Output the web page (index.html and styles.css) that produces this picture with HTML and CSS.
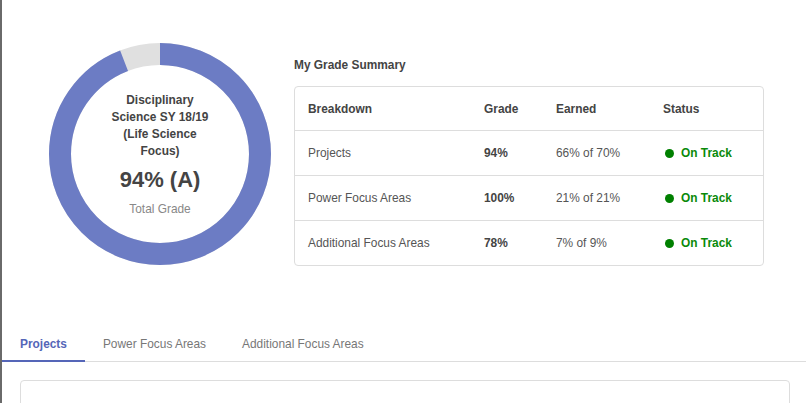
FILE: index.html
```html
<!DOCTYPE html>
<html>
<head>
<meta charset="utf-8">
<link rel="stylesheet" href="styles.css">
</head>
<body>
<div class="page">
  <section class="summary">
    <div class="donut">
      <svg class="donut-svg" width="222" height="222" viewBox="0 0 222 222">
        <circle cx="111" cy="111" r="100" fill="none" stroke="#e0e0e0" stroke-width="22"/>
        <circle cx="111" cy="111" r="100" fill="none" stroke="#6c7cc4" stroke-width="22"
          stroke-dasharray="590.6 628.3" transform="rotate(-90 111 111)"/>
      </svg>
      <div class="donut-text">
        <div class="course">Disciplinary Science SY 18/19 (Life Science Focus)</div>
        <div class="grade">94% (A)</div>
        <div class="grade-label">Total Grade</div>
      </div>
    </div>
    <div class="grade-summary">
      <h2 class="summary-title">My Grade Summary</h2>
      <div class="table">
        <div class="row head">
          <div>Breakdown</div><div>Grade</div><div>Earned</div><div>Status</div>
        </div>
        <div class="row">
          <div>Projects</div><div class="bold">94%</div><div>66% of 70%</div>
          <div class="status"><span class="dot"></span>On Track</div>
        </div>
        <div class="row">
          <div>Power Focus Areas</div><div class="bold">100%</div><div>21% of 21%</div>
          <div class="status"><span class="dot"></span>On Track</div>
        </div>
        <div class="row">
          <div>Additional Focus Areas</div><div class="bold">78%</div><div>7% of 9%</div>
          <div class="status"><span class="dot"></span>On Track</div>
        </div>
      </div>
    </div>
  </section>
  <nav class="tabs">
    <div class="tab active">Projects</div>
    <div class="tab">Power Focus Areas</div>
    <div class="tab">Additional Focus Areas</div>
  </nav>
  <div class="panel"></div>
</div>
</body>
</html>
```

FILE: styles.css
```css
* { box-sizing: border-box; }
html, body { margin: 0; padding: 0; background: #fff; }
body {
  font-family: "Liberation Sans", Arial, sans-serif;
  font-size: 11.9px;
  color: #555;
  overflow: hidden;
  height: 403px;
}
.page {
  border-left: 2px solid #6a6a6a;
  min-height: 403px;
}
.summary {
  display: flex;
  align-items: flex-start;
  padding: 43px 0 0 47px;
  gap: 23px;
}
.donut {
  position: relative;
  width: 222px;
  height: 222px;
  flex: none;
}
.donut-svg { display: block; }
.donut-text {
  position: absolute;
  inset: 0;
  display: flex;
  flex-direction: column;
  align-items: center;
  justify-content: center;
  text-align: center;
  padding-top: 1px;
}
.course {
  width: 110px;
  font-weight: bold;
  font-size: 11.9px;
  line-height: 17px;
  color: #444;
}
.grade {
  margin-top: 7px;
  font-size: 22px;
  line-height: 26px;
  font-weight: bold;
  color: #444;
}
.grade-label {
  margin-top: 8px;
  font-size: 11.9px;
  line-height: 17px;
  color: #888;
}
.grade-summary {
  width: 470px;
}
.summary-title {
  margin: 15px 0 13px;
  font-size: 11.9px;
  line-height: 15px;
  font-weight: bold;
  color: #444;
}
.table {
  border: 1px solid #ddd;
  border-radius: 4px;
}
.row {
  display: grid;
  grid-template-columns: 176px 72px 107px 1fr;
  align-items: center;
  height: 45px;
  padding-left: 13px;
  padding-bottom: 1px;
  border-top: 1px solid #ddd;
}
.row.head {
  border-top: none;
  height: 43px;
  padding-bottom: 0;
  font-weight: bold;
  color: #444;
}
.bold { font-weight: bold; color: #444; }
.status {
  display: flex;
  align-items: center;
  font-weight: bold;
  color: #0a8a0a;
  padding-top: 1px;
}
.dot {
  width: 9px;
  height: 9px;
  border-radius: 50%;
  background: #008000;
  margin: 0 7px 0 2px;
}
.tabs {
  display: flex;
  margin-top: 60px;
  border-bottom: 1px solid #ddd;
}
.tab {
  padding: 10px 18px 8px;
  line-height: 16px;
  color: #777;
  border-bottom: 2px solid transparent;
  margin-bottom: -1px;
}
.tab.active {
  color: #5566b8;
  font-weight: bold;
  border-bottom-color: #5566b8;
}
.panel {
  margin: 18px 16px 0 18px;
  height: 80px;
  border: 1px solid #ddd;
  border-radius: 4px;
}
```
